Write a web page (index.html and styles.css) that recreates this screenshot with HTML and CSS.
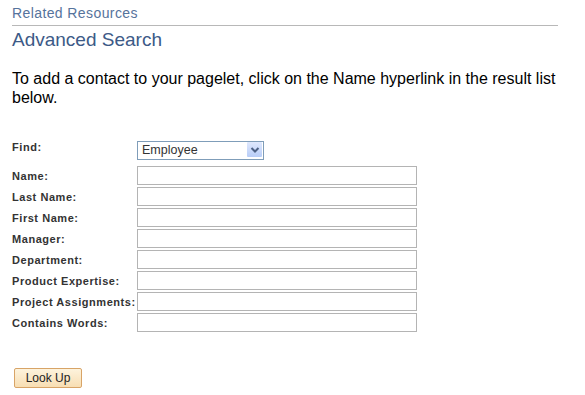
FILE: index.html
```html
<!DOCTYPE html>
<html lang="en">

<head>
  <meta charset="UTF-8">
  <meta name="viewport" content="width=device-width, initial-scale=1.0">
  <title>Advanced Search</title>
  <link rel="stylesheet" href="styles.css">
</head>

<body>
  <div class="page">
    <div class="related-header">Related Resources</div>
    <h1 class="page-title">Advanced Search</h1>

    <p class="instructions">To add a contact to your pagelet, click on the Name hyperlink in the result list below.</p>

    <form class="search-form">
      <div class="form-row find-row">
        <label for="findSelect">Find:</label>
        <span class="select-wrap">
          <select id="findSelect">
            <option>Employee</option>
          </select>
          <span class="select-arrow">
            <svg width="16" height="15" viewBox="0 0 16 15">
              <path d="M4.5 6 L8 9.5 L11.5 6" fill="none" stroke="#4d6185" stroke-width="2" />
            </svg>
          </span>
        </span>
      </div>
      <div class="form-row"><label>Name:</label><input type="text"></div>
      <div class="form-row"><label>Last Name:</label><input type="text"></div>
      <div class="form-row"><label>First Name:</label><input type="text"></div>
      <div class="form-row"><label>Manager:</label><input type="text"></div>
      <div class="form-row"><label>Department:</label><input type="text"></div>
      <div class="form-row"><label>Product Expertise:</label><input type="text"></div>
      <div class="form-row"><label>Project Assignments:</label><input type="text"></div>
      <div class="form-row"><label>Contains Words:</label><input type="text"></div>

      <!-- Submit -->
      <button type="button" class="lookup-btn">Look Up</button>
    </form>
  </div>
</body>

</html>
```

FILE: styles.css
```css
/* General body styling */
body {
  font-family: Arial, "Liberation Sans", sans-serif;
  margin: 0;
  padding: 0;
  background-color: white;
  color: #000;
}

.page {
  padding: 5px 0 0 12px;
  width: 546px;
}

/* Header bits */
.related-header {
  font-size: 14px;
  line-height: 17px;
  letter-spacing: 0.4px;
  color: #56739c;
  padding-bottom: 3px;
  border-bottom: 1px solid #b8b8b8;
}

.page-title {
  margin: 2px 0 0 0;
  font-size: 19px;
  line-height: 23px;
  font-weight: normal;
  color: #3c5a87;
}

.instructions {
  margin: 18px 0 0 0;
  font-size: 16px;
  line-height: 19px;
  width: 546px;
}

/* Search form */
.search-form {
  margin-top: 33px;
  display: flex;
  flex-direction: column;
  gap: 2px;
}

.form-row {
  display: flex;
  align-items: center;
}

.form-row label {
  width: 125px;
  font-size: 11px;
  letter-spacing: 0.55px;
  font-weight: bold;
  color: #333;
  white-space: nowrap;
}

.form-row input {
  box-sizing: border-box;
  width: 280px;
  height: 19px;
  margin: 0;
  border: 1px solid #b4b4b4;
  padding: 1px 3px;
  font-family: Arial, "Liberation Sans", sans-serif;
  font-size: 12px;
}

.find-row {
  align-items: flex-start;
  height: 24px;
}

.find-row label {
  padding-top: 1px;
}

.select-wrap {
  position: relative;
  display: inline-block;
  width: 127px;
  height: 19px;
}

.select-wrap select {
  appearance: none;
  -webkit-appearance: none;
  box-sizing: border-box;
  width: 127px;
  height: 19px;
  margin: 0;
  border: 1px solid #7f9db9;
  border-radius: 0;
  background: white;
  padding: 0 0 0 4px;
  font-family: Arial, "Liberation Sans", sans-serif;
  font-size: 12.5px;
  color: #333;
}

.select-arrow {
  position: absolute;
  top: 2px;
  right: 2px;
  width: 15px;
  height: 15px;
  background: linear-gradient(#dfe8fd, #b8cdf8);
  border-radius: 1px;
  pointer-events: none;
}

.select-arrow svg {
  display: block;
}

.lookup-btn {
  align-self: flex-start;
  margin: 34px 0 0 2px;
  box-sizing: border-box;
  width: 68px;
  height: 20px;
  padding: 0;
  border: 1px solid #d8a467;
  border-radius: 2px;
  background: linear-gradient(#fdf3dd, #f8deb3);
  font-family: Arial, "Liberation Sans", sans-serif;
  font-size: 12px;
  color: #222;
  cursor: pointer;
}
```
